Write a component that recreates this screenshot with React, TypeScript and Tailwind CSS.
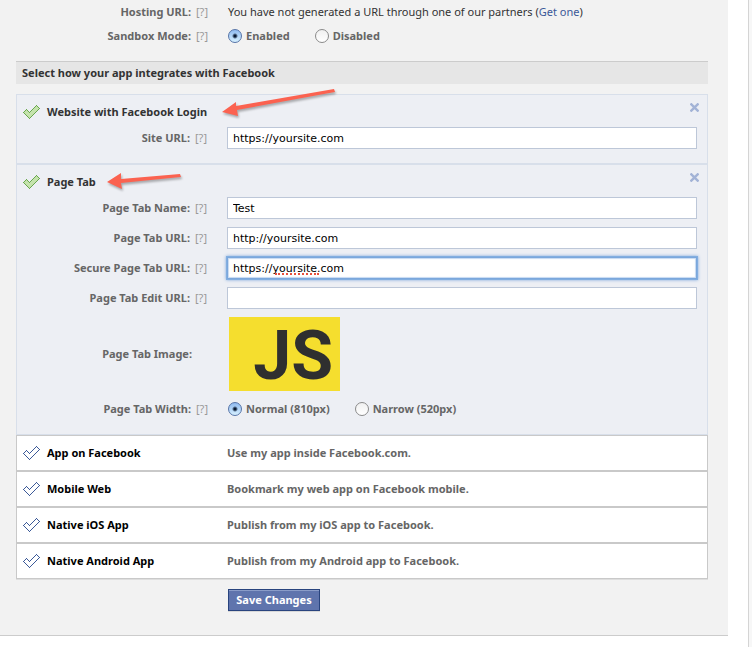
import React, { useState } from 'react';

type Pixel = [number, number];

const CORNERS: Pixel[] = [[0, 7], [6, 13], [16, 3], [13, 0], [6, 7], [3, 4], [0, 7]];

// Walks the diagonals between the corners, one pixel at a time.
function outlinePixels(corners: Pixel[]): Pixel[] {
  const out: Pixel[] = [];
  for (let i = 0; i < corners.length - 1; i++) {
    const [x0, y0] = corners[i];
    const [x1, y1] = corners[i + 1];
    const steps = Math.abs(x1 - x0);
    for (let s = 0; s < steps; s++) {
      out.push([x0 + Math.sign(x1 - x0) * s, y0 + Math.sign(y1 - y0) * s]);
    }
  }
  return out;
}

const PIXELS = outlinePixels(CORNERS);

function CheckIcon({ active = false }: { active?: boolean }) {
  return (
    <svg width="17" height="14" viewBox="0 0 17 14" className="shrink-0" shapeRendering="crispEdges" aria-hidden="true">
      {active && <polygon points="0.5,7.5 6.5,13.5 16.5,3.5 13.5,0.5 6.5,7.5 3.5,4.5" fill="#c5e3ad" />}
      {PIXELS.map(([x, y]) => (
        <rect key={`${x}-${y}`} x={x} y={y} width="1" height="1" fill={active ? '#69a74e' : '#3b5998'} />
      ))}
    </svg>
  );
}

function CloseButton({ label }: { label: string }) {
  return (
    <button type="button" aria-label={label} className="absolute top-2 right-2">
      <svg width="9" height="9" viewBox="0 0 9 9" className="block" aria-hidden="true">
        <path d="M0.5 0.5L8.500 8.500M8.500 0.5L0.5 8.500" stroke="#a3b3d6" strokeWidth="2.4" />
      </svg>
    </button>
  );
}

function Help() {
  return (
    <a href="#help" aria-label="Help" className="w-[14px] text-center font-normal text-[#999]">
      [?]
    </a>
  );
}

function Caption({ htmlFor, children, help = true }: { htmlFor?: string; children: string; help?: boolean }) {
  return (
    <div className="flex w-[191px] shrink-0 items-center justify-end gap-1 whitespace-nowrap font-bold text-[#666]">
      {htmlFor ? <label htmlFor={htmlFor}>{children}</label> : <span>{children}</span>}
      {help ? <Help /> : <span className="w-3" />}
    </div>
  );
}

const FIELD =
  "block h-[22px] w-full border bg-white px-[5px] font-['DejaVu_Sans',sans-serif] text-[11px] text-black outline-none";

function Field({ id, label, value, focused = false }: { id: string; label: string; value: string; focused?: boolean }) {
  const [text, setText] = useState(value);
  return (
    <div className="flex items-center gap-[19px]">
      <Caption htmlFor={id}>{label}</Caption>
      <div className="relative flex-1">
        <input
          id={id}
          type="text"
          spellCheck={false}
          value={text}
          onChange={(e) => setText(e.target.value)}
          className={
            focused
              ? `${FIELD} border-[#7ba7dc] shadow-[0_0_0_1px_#82aee0,0_0_3px_1px_#7ba7dc,inset_0_0_1px_1px_#c6daf2]`
              : `${FIELD} border-[#bdc7d8]`
          }
        />
        {focused && (
          <span aria-hidden="true" className="absolute bottom-1 left-12 w-11 border-b-2 border-dotted border-[#e8503c]" />
        )}
      </div>
    </div>
  );
}

function Radio({ name, label, defaultChecked }: { name: string; label: string; defaultChecked?: boolean }) {
  return (
    <label className="flex items-center gap-1 whitespace-nowrap font-bold text-[#666]">
      <input
        type="radio"
        name={name}
        defaultChecked={defaultChecked}
        className="size-[14px] appearance-none rounded-full border border-[#8a8a8a] bg-[linear-gradient(#f0f0f0,#ffffff)] checked:border-[#5674a8] checked:bg-[radial-gradient(circle,#0a1a33_0,#0a1a33_1px,transparent_3px),linear-gradient(#8fbaf0,#d6f0ff)]"
      />
      {label}
    </label>
  );
}

function Section({ title, arrow, className, children }: { title: string; arrow: React.ReactNode; className: string; children: React.ReactNode }) {
  return (
    <section className={`relative border border-[#d8dfea] bg-[#edeff4] pt-2 pr-[10px] ${className}`}>
      <CloseButton label={`Remove ${title}`} />
      <div className="mb-[6px] flex h-[18px] items-center gap-[7px] pl-[6px]">
        <CheckIcon active />
        <h3 className="relative font-bold text-[#333]">
          {title}
          {arrow}
        </h3>
      </div>
      <div className="flex flex-col gap-2">{children}</div>
    </section>
  );
}

const ARROW = 'pointer-events-none absolute left-full drop-shadow-[1px_2px_1px_rgba(0,0,0,0.3)]';

const OPTIONS = [
  { title: 'App on Facebook', text: 'Use my app inside Facebook.com.' },
  { title: 'Mobile Web', text: 'Bookmark my web app on Facebook mobile.' },
  { title: 'Native iOS App', text: 'Publish from my iOS app to Facebook.' },
  { title: 'Native Android App', text: 'Publish from my Android app to Facebook.' },
];

export default function App() {
  return (
    <div className="flex min-h-screen items-stretch bg-white font-['Noto_Sans',sans-serif] text-[11px] leading-4 text-[#333]">
      <main className="mr-5 flex-1 self-start border-b border-[#ccc] bg-[#f2f2f2] pr-5 pb-6 pl-4">
        <div className="flex h-6 items-center gap-[19px] pl-[2px]">
          <Caption>Hosting URL:</Caption>
          <p>
            You have not generated a URL through one of our partners (
            <a href="#get-one" className="text-[#3b5998]">Get one</a>)
          </p>
        </div>
        <div className="flex h-6 items-center gap-[19px] pl-[2px]">
          <Caption>Sandbox Mode:</Caption>
          <div className="flex gap-[25px]">
            <Radio name="sandbox" label="Enabled" defaultChecked />
            <Radio name="sandbox" label="Disabled" />
          </div>
        </div>

        <h2 className="mt-[13px] mb-[10px] flex h-[23px] items-center border-t border-[#ccc] bg-[#e6e6e6] pl-[6px] font-bold text-[#333]">
          Select how your app integrates with Facebook
        </h2>

        <Section
          title="Website with Facebook Login"
          className="pb-[14px]"
          arrow={
            <svg width="130" height="34" viewBox="0 0 130 34" className={`${ARROW} bottom-[2px] ml-[15px]`} aria-hidden="true">
              <polygon points="0,28 14,18 14,22 112,5 113,8 15,26 16,32" fill="#fb6250" />
            </svg>
          }
        >
          <Field id="site-url" label="Site URL:" value="https://yoursite.com" />
        </Section>

        <Section
          title="Page Tab"
          className="pb-[15px]"
          arrow={
            <svg width="80" height="22" viewBox="0 0 80 22" className={`${ARROW} -top-[2px] ml-[11px]`} aria-hidden="true">
              <polygon points="0,10 14,1 14,7 73,2 74,5 14,11 15,17" fill="#fb6250" />
            </svg>
          }
        >
          <Field id="tab-name" label="Page Tab Name:" value="Test" />
          <Field id="tab-url" label="Page Tab URL:" value="http://yoursite.com" />
          <Field id="secure-url" label="Secure Page Tab URL:" value="https://yoursite.com" focused />
          <Field id="edit-url" label="Page Tab Edit URL:" value="" />
          <div className="flex items-center gap-[21px]">
            <Caption help={false}>Page Tab Image:</Caption>
            <div
              role="img"
              aria-label="JavaScript"
              className="flex h-[74px] w-[111px] items-center justify-end bg-[#f5de2e] pt-1 pr-[7px] font-['Roboto',sans-serif] text-[68px] leading-none font-bold text-[#2f2f2f]"
            >
              JS
            </div>
          </div>
          <div className="flex h-5 items-center gap-[19px] pl-px">
            <Caption>Page Tab Width:</Caption>
            <div className="flex gap-[25px]">
              <Radio name="width" label="Normal (810px)" defaultChecked />
              <Radio name="width" label="Narrow (520px)" />
            </div>
          </div>
        </Section>

        <div className="shadow-[0_1px_0_#dedede]">
          {OPTIONS.map((o) => (
            <button
              key={o.title}
              type="button"
              className="flex h-9 w-full items-center border border-[#c9c9c9] bg-white pl-[6px] text-left font-bold"
            >
              <CheckIcon />
              <span className="ml-[7px] w-[180px] shrink-0 text-black">{o.title}</span>
              <span className="text-[#666]">{o.text}</span>
            </button>
          ))}
        </div>

        <div className="mt-[10px] flex gap-[19px]">
          <span className="w-[193px] shrink-0" />
          <button
            type="button"
            className="h-[22px] min-w-[92px] border border-[#29447e] bg-[#5f74ad] px-[6px] font-bold text-white shadow-[0_1px_0_#d8d8d8,inset_0_1px_0_#8a9cc8]"
          >
            Save Changes
          </button>
        </div>
      </main>
      <aside className="w-1 shrink-0 border-l border-[#d4d4d4] bg-[#f7f7f7]" />
    </div>
  );
}
